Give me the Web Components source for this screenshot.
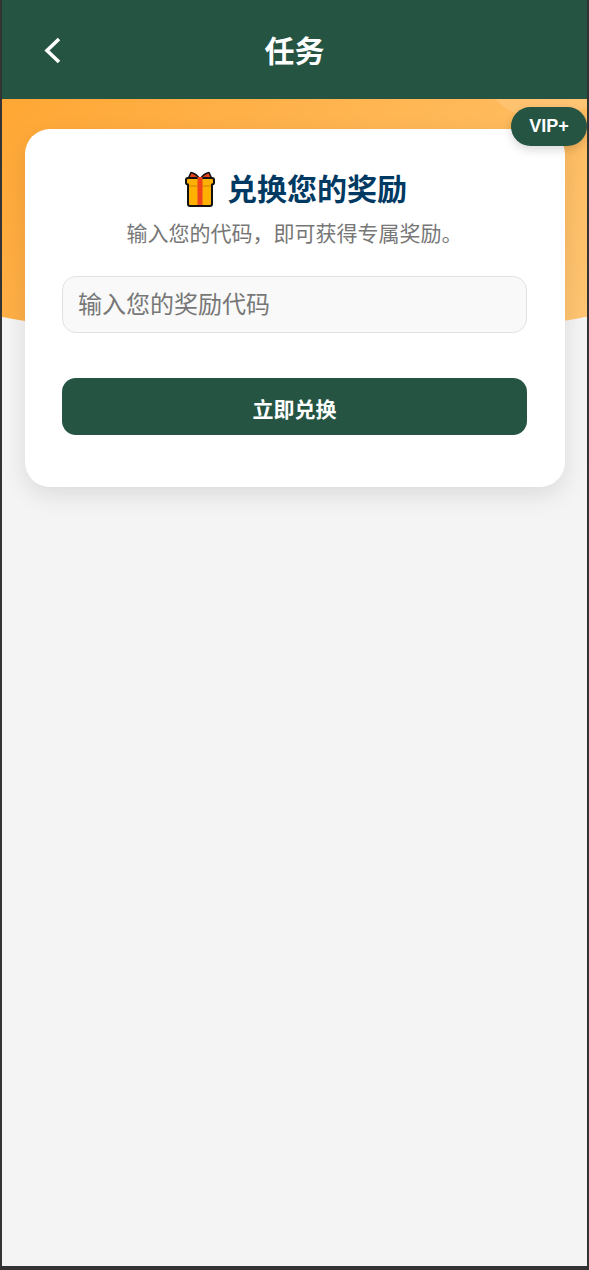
<!DOCTYPE html>
<html lang="zh">
<head>
<meta charset="utf-8">
<title>任务</title>
<style>
  html, body { margin: 0; padding: 0; height: 100%; background: #333; }
  body { font-family: "Liberation Sans", "Noto Sans CJK SC", sans-serif; }
</style>
</head>
<body>
<task-page>
  <top-bar title-text="任务"></top-bar>
  <redeem-card></redeem-card>
</task-page>

<script>
class TaskPage extends HTMLElement {
  constructor() {
    super();
    this.attachShadow({ mode: 'open' });
    this.shadowRoot.innerHTML = `
      <style>
        :host {
          display: flex;
          flex-direction: column;
          box-sizing: border-box;
          height: 1266px;
          margin: 0 2px;
          background: #f4f4f4;
          position: relative;
          overflow: hidden;
        }
        .banner {
          position: absolute;
          left: -58px;
          width: 700px;
          top: 99px;
          height: 239px;
          background: linear-gradient(135deg, #ffa530 0%, #ffc878 100%);
          border-radius: 0 0 350px 350px / 0 0 47px 47px;
          overflow: hidden;
        }
        .banner::after {
          content: '';
          position: absolute;
          width: 140px;
          height: 140px;
          left: 531px;
          top: -119px;
          border-radius: 50%;
          background: rgba(255,255,255,0.12);
        }
        .vip {
          position: absolute;
          top: 107px;
          right: 0;
          width: 76px;
          height: 39px;
          border-radius: 20px;
          background: #255443;
          color: #fff;
          font: bold 18px "Liberation Sans", sans-serif;
          display: flex;
          align-items: center;
          justify-content: center;
          box-shadow: 0 4px 10px rgba(0,0,0,0.15);
        }
        .content { position: relative; }
      </style>
      <div class="banner"></div>
      <div class="content"><slot></slot></div>
      <div class="vip">VIP+</div>
    `;
  }
}

class TopBar extends HTMLElement {
  constructor() {
    super();
    this.attachShadow({ mode: 'open' });
    this.shadowRoot.innerHTML = `
      <style>
        :host {
          display: flex;
          align-items: center;
          justify-content: center;
          height: 99px;
          background: #255443;
          color: #fff;
          position: relative;
        }
        svg { position: absolute; left: 38px; top: 37px; }
        h1 {
          margin: 0;
          font: bold 30px/1 "Noto Sans CJK SC", sans-serif;
          position: relative;
          top: -1px;
        }
      </style>
      <svg width="22" height="28" viewBox="0 0 22 28" fill="none" stroke="#fff" stroke-width="3.6">
        <path d="M19 2 L7 13.5 L19 25"/>
      </svg>
      <h1></h1>
    `;
    this.shadowRoot.querySelector('h1').textContent = this.getAttribute('title-text');
  }
}

class RedeemCard extends HTMLElement {
  constructor() {
    super();
    this.attachShadow({ mode: 'open' });
    this.shadowRoot.innerHTML = `
      <style>
        :host {
          display: block;
          box-sizing: border-box;
          width: 540px;
          height: 358px;
          margin: 30px 0 0 23px;
          padding: 37px 38px 37px 37px;
          background: #fff;
          border-radius: 25px;
          box-shadow: 0 8px 24px rgba(0,0,0,0.1);
          font-family: "Noto Sans CJK SC", sans-serif;
        }
        .head {
          display: flex;
          align-items: center;
          justify-content: center;
          gap: 11px;
          height: 46px;
          padding-left: 2px;
        }
        h2 {
          margin: -4px 0 0;
          font-size: 30px;
          line-height: 46px;
          font-weight: 700;
          color: #003a63;
        }
        p {
          margin: 5px 0 0;
          height: 30px;
          font-size: 21px;
          line-height: 30px;
          text-align: center;
          color: #777;
        }
        input {
          display: block;
          box-sizing: border-box;
          width: 100%;
          height: 57px;
          margin-top: 29px;
          padding: 0 15px 4px;
          border: 1px solid #e2e2e2;
          border-radius: 14px;
          background: #f9f9f9;
          font: 24px "Noto Sans CJK SC", sans-serif;
          outline: none;
        }
        input::placeholder { color: #777; opacity: 1; }
        button {
          display: block;
          width: 100%;
          height: 57px;
          margin-top: 45px;
          border: 0;
          border-radius: 14px;
          background: #255443;
          color: #fff;
          font: bold 21px "Noto Sans CJK SC", sans-serif;
          padding: 3px 0 0;
        }
      </style>
      <div class="head">
        <svg width="32" height="36" viewBox="0 0 32 36">
          <path d="M16 8 C13 4 10 2 7 1.5 L4 8 Z M16 8 C19 4 22 2 25 1.5 L28 8 Z" fill="#e8401c" stroke="#111" stroke-width="1.6" stroke-linejoin="round"/>
          <path d="M4 7 H28 Q30 7 30 9 V11.5 Q30 13.5 28 13.5 V33 Q28 35 26 35 H6 Q4 35 4 33 V13.5 Q2 13.5 2 11.5 V9 Q2 7 4 7 Z" fill="#ffb000" stroke="#111" stroke-width="2" stroke-linejoin="round"/>
          <rect x="5" y="14" width="22" height="2" fill="#e79a00"/>
          <rect x="13.5" y="6" width="5" height="28" fill="#f0431c"/>
        </svg>
        <h2>兑换您的奖励</h2>
      </div>
      <p>输入您的代码，即可获得专属奖励。</p>
      <input type="text" placeholder="输入您的奖励代码">
      <button>立即兑换</button>
    `;
  }
}

customElements.define('task-page', TaskPage);
customElements.define('top-bar', TopBar);
customElements.define('redeem-card', RedeemCard);
</script>
</body>
</html>
